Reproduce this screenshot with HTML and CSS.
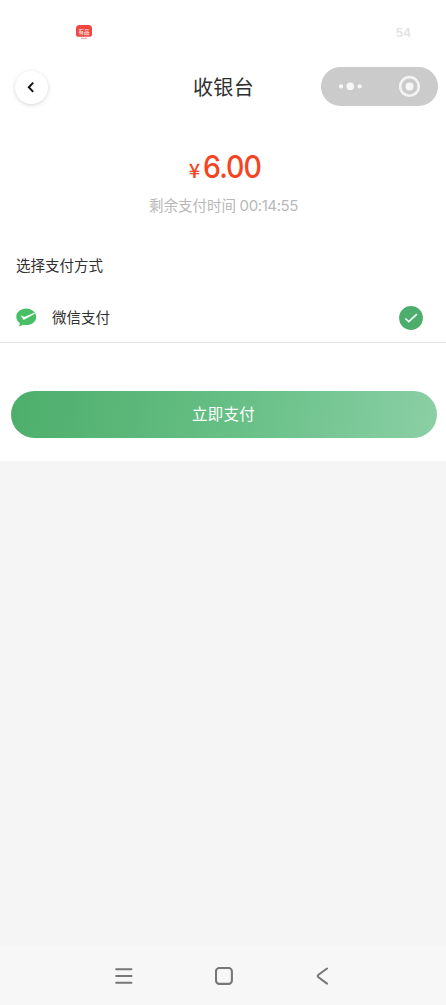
FILE: index.html
```html
<!DOCTYPE html>
<html lang="zh-CN">
<head>
<meta charset="utf-8">
<title>收银台</title>
<link rel="stylesheet" href="styles.css">
</head>
<body>
<div class="screen">
  <main class="panel">
    <div class="status">
      <svg class="app-icon" width="18" height="16" viewBox="0 0 18 16">
        <path d="M4.500 1h9q3.500 0 3.500 3.500v5.700q0 2.600-2.600 2.600H3.600Q1 12.800 1 10.200V4.500Q1 1 4.500 1z" fill="#f24740"/>
        <path d="M6 14.300h6" stroke="#f69b96" stroke-width="1"/>
        <text class="app-text" x="9" y="10" text-anchor="middle">有品</text>
      </svg>
      <span class="battery">54</span>
    </div>
    <header class="header">
      <button class="back" aria-label="返回">
        <svg width="33" height="33" viewBox="0 0 33 33"><path d="M18.200 11.600 13.800 16.300l4.400 4.600" fill="none" stroke="#151515" stroke-width="2"/></svg>
      </button>
      <h1 class="title">收银台</h1>
      <div class="capsule">
        <svg width="117" height="39" viewBox="0 0 117 39" fill="#f7f7f7">
          <circle cx="20" cy="19.400" r="2.100"/><circle cx="29.300" cy="19.400" r="3.800"/><circle cx="38.600" cy="19.400" r="2.100"/>
          <circle cx="88.500" cy="19.400" r="9.300" fill="none" stroke="#f3f3f3" stroke-width="2.600"/><circle cx="88.500" cy="19.400" r="4"/>
        </svg>
      </div>
    </header>
    <div class="price"><span class="currency">¥</span><span class="amount">6.00</span></div>
    <p class="remaining">剩余支付时间 <span class="time">00:14:55</span></p>
    <h2 class="section">选择支付方式</h2>
    <div class="method">
      <svg width="21" height="19" viewBox="0 0 21 19">
        <path d="M10.200.600C4.600.600.300 4.200.300 8.900c0 2.500 1.300 4.700 3.500 6.200l-.6 3.300 3.900-1.700c1 .3 2 .4 3.100.4 5.600 0 10-3.600 10-8.200S15.800.600 10.200.600z" fill="#48bf65"/>
        <path d="M4.700 7.300 7.300 11.500q.5.500 1.200.1L18.900 5.700 18.200 4.700 8.400 9z" fill="#fff"/>
      </svg>
      <span class="method-name">微信支付</span>
      <svg class="selected" width="24" height="24" viewBox="0 0 24 24"><circle cx="12" cy="12" r="11.900" fill="#4dad6c"/><path d="m6.300 12.500 3.500 3.200 8.100-7.600" fill="none" stroke="#f7fff9" stroke-width="1.600"/></svg>
    </div>
    <button class="pay">立即支付</button>
  </main>
  <nav class="navbar">
    <svg width="18" height="18" viewBox="0 0 18 18"><path d="M1.200 2.200h15.200M1.200 9h15.200M1.200 15.700h15.200" stroke="#777" stroke-width="2.100" stroke-linecap="round"/></svg>
    <svg width="18" height="18" viewBox="0 0 18 18"><rect x="1" y="1" width="15.900" height="15.900" rx="3.300" fill="none" stroke="#777" stroke-width="2.100"/></svg>
    <svg width="18" height="18" viewBox="0 0 18 18"><path d="M13 1.500 4.500 7.700q-1.500 1.300 0 2.600l8.500 6.300" fill="none" stroke="#777" stroke-width="2.100" stroke-linecap="round"/></svg>
  </nav>
</div>
</body>
</html>
```
FILE: styles.css
```css
* { box-sizing: border-box; }
body { margin: 0; background: #f5f5f5; color: #303030; font-family: Roboto, "Noto Sans CJK SC", sans-serif; }
svg { display: block; flex: none; }
h1, h2, p { margin: 0; font-weight: 400; }
button { border: 0; padding: 0; font-family: inherit; }
.screen { width: 446px; height: 1005px; display: flex; flex-direction: column; justify-content: space-between; }
.panel { height: 461px; background: #fff; }
.status { height: 67px; padding: 24px 35px 0 75px; display: flex; justify-content: space-between; }
.app-text { font-size: 5.500px; font-weight: 500; fill: #ffe9e7; }
.battery { font: 600 12px/17px Inter, sans-serif; color: #e2e2e2; }
.header { height: 39px; padding: 0 8px 0 15px; display: grid; grid-template-columns: 117px 1fr 117px; align-items: start; }
.back { width: 33px; height: 33px; margin: 4px 0 0 -.5px; border-radius: 50%; background: #fff; box-shadow: 0 1px 4px rgba(0, 0, 0, .17); }
.title { font-size: 20px; line-height: 38px; letter-spacing: .4px; text-align: center; padding-top: 2px; padding-right: 6px; }
.capsule { height: 38.500px; border-radius: 20px; background: #cbcbcb; }
.price { height: 41px; margin-top: 40px; display: flex; justify-content: center; align-items: baseline; color: #f54423; line-height: 41px; padding-left: 4px; }
.currency { font-family: "Noto Sans CJK SC", sans-serif; font-size: 20px; font-weight: 500; margin-right: 3px; line-height: 30px; }
.amount { width: 58px; font-family: Inter, sans-serif; font-size: 31px; font-weight: 500; letter-spacing: -1px; transform: scaleX(.92); transform-origin: left; }
.remaining { height: 22px; margin-top: 8px; text-align: center; font-size: 14.500px; line-height: 22px; color: #b8b8b8; padding-left: 1px; }
.time { font-family: Inter, sans-serif; font-size: 15px; letter-spacing: -.4px; }
.section { height: 22px; margin: 39px 16px 0; font-size: 14.500px; line-height: 22px; }
.method { height: 65px; padding: 15px 23px 0 16px; display: flex; align-items: center; border-bottom: 1px solid #e7e7e7; }
.method-name { margin-left: 15px; padding-top: 2px; font-size: 14.500px; line-height: 22px; }
.selected { margin-left: auto; }
.pay { display: block; width: 426px; height: 47px; margin: 47.500px 0 0 10.500px; padding-bottom: 2px; border-radius: 24px; background: linear-gradient(100deg, #4dae6a, #68c087 55%, #8bcfa5); color: #fff; font-size: 15.500px; letter-spacing: .2px; }
.navbar { height: 58px; padding: 0 114px 0 115px; background: #f7f7f7; display: flex; justify-content: space-between; align-items: center; }
```
